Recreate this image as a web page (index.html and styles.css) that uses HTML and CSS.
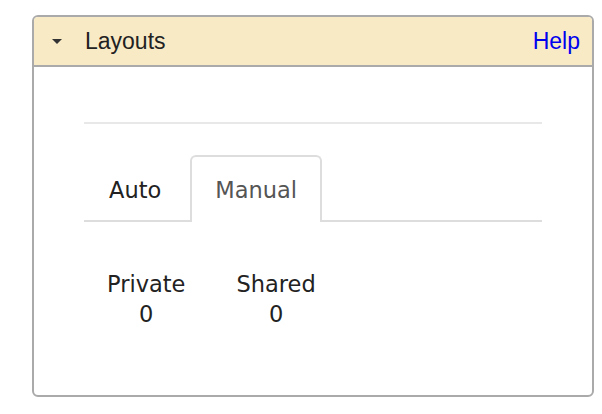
FILE: index.html
```html
<!DOCTYPE html>
<html>
<head>
<meta charset="utf-8">
<link rel="stylesheet" href="styles.css">
</head>
<body>
<div class="panel">
  <div class="panel-header">
    <span class="caret"></span>
    <span class="title">Layouts</span>
    <a class="help" href="#">Help</a>
  </div>
  <div class="panel-body">
    <div class="rule"></div>
    <ul class="tabs">
      <li class="tab">Auto</li>
      <li class="tab active">Manual</li>
    </ul>
    <div class="stats">
      <div class="stat"><div>Private</div><div>0</div></div>
      <div class="stat"><div>Shared</div><div>0</div></div>
    </div>
  </div>
</div>
</body>
</html>
```

FILE: styles.css
```css
html, body {
  margin: 0;
  padding: 0;
  background: #fff;
}
body {
  padding: 15px 0 0 32px;
}
.panel {
  width: 562px;
  height: 382px;
  box-sizing: border-box;
  border: 2px solid #aaa;
  border-radius: 6px;
  overflow: hidden;
  display: flex;
  flex-direction: column;
}
.panel-header {
  height: 48px;
  background: #f9eac6;
  border-bottom: 2px solid #aaa;
  display: flex;
  align-items: center;
  padding: 0 12px 0 18px;
  font-family: "Liberation Sans", Arial, sans-serif;
  font-size: 23px;
  color: #222;
}
.caret {
  width: 0;
  height: 0;
  border-left: 5px solid transparent;
  border-right: 5px solid transparent;
  border-top: 5px solid #333;
  margin-right: 23px;
  margin-top: 1px;
}
.title {
  flex: 1;
}
.help {
  color: #0000ee;
  text-decoration: none;
}
.panel-body {
  flex: 1;
  padding: 55px 50px 0 50px;
  font-family: "DejaVu Sans", Verdana, sans-serif;
  font-size: 22.5px;
  color: #222;
}
.rule {
  height: 2px;
  background: #e8e8e8;
}
.tabs {
  list-style: none;
  margin: 31px 0 0 0;
  padding: 0;
  display: flex;
  border-bottom: 2px solid #ddd;
}
.tab {
  padding: 0 23px;
  height: 63px;
  line-height: 66px;
  border: 2px solid transparent;
  border-bottom: none;
  margin-right: 4px;
  margin-bottom: -2px;
  border-radius: 6px 6px 0 0;
}
.tab.active {
  border-color: #ddd;
  background: #fff;
  color: #555;
  height: 65px;
}
.stats {
  display: flex;
  gap: 51px;
  padding-left: 23px;
  margin-top: 47px;
}
.stat {
  display: flex;
  flex-direction: column;
  align-items: center;
  line-height: 30px;
}
```
